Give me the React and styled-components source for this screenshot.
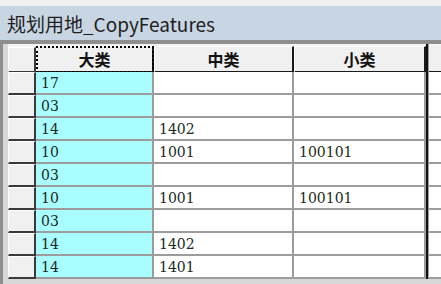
import React from "react";
import styled, { createGlobalStyle } from "styled-components";

const Global = createGlobalStyle`
  html, body { margin: 0; padding: 0; background: #f3f3f3; overflow: hidden; }
  body { width: 441px; height: 284px; }
`;

const Window = styled.div`
  width: 441px;
  height: 284px;
  display: flex;
  flex-direction: column;
  background: #f3f3f3;
`;

const TopStrip = styled.div`
  height: 6px;
  background: #eef0f2;
`;

const TitleBar = styled.div`
  height: 34px;
  background: #c8d5e2;
  display: flex;
  align-items: center;
  padding-left: 7px;
  padding-top: 1px;
  box-sizing: border-box;
  font-family: "Noto Sans CJK SC", "Noto Sans", sans-serif;
  font-size: 19px;
  color: #1e1e1e;
  white-space: nowrap;
`;

const Frame = styled.div`
  flex: 1;
  border-top: 4px solid #8e8e8e;
  border-left: 3px solid #8e8e8e;
  background: #d8d8d8;
  padding-left: 5px;
  overflow: hidden;
`;

const Row = styled.div`
  display: grid;
  grid-template-columns: 28px 118px 140px 132px 3px 20px;
  height: ${(p) => p.$h}px;
  background: #f3f3f3;
`;

const Selector = styled.div`
  box-sizing: border-box;
  background: #f0f0f0;
  border-top: 1px solid #ffffff;
  border-left: 1px solid #ffffff;
  border-right: 2px solid #3a3a3a;
  border-bottom: 2px solid #3a3a3a;
  margin-top: ${(p) => (p.$header ? 3 : 0)}px;
`;

const Head = styled.div`
  box-sizing: border-box;
  background: #f0f0f0;
  margin-top: 2px;
  border-top: 1px solid #ffffff;
  border-left: 1px solid #ffffff;
  border-right: 2px solid #1a1a1a;
  border-bottom: 2px solid #1a1a1a;
  display: flex;
  align-items: center;
  justify-content: center;
  font-family: "Noto Sans CJK SC", sans-serif;
  font-weight: 700;
  font-size: 16px;
  color: #111;
  outline: ${(p) => (p.$focus ? "2px dotted #000" : "none")};
  outline-offset: -2px;
`;

const Cell = styled.div`
  box-sizing: border-box;
  background: ${(p) => (p.$key ? "#a9fdff" : "#ffffff")};
  border-right: 2px solid #9c9c9c;
  border-bottom: 2px solid #9c9c9c;
  padding-left: 5px;
  display: flex;
  align-items: center;
  font-family: "DejaVu Serif", "Liberation Serif", serif;
  font-size: 14px;
  color: #1b2a1b;
  white-space: nowrap;
`;

const Divider = styled.div`
  background: #111;
  border-right: 1px solid #9c9c9c;
`;

const Extra = styled.div`
  box-sizing: border-box;
  background: ${(p) => (p.$header ? "#f0f0f0" : "#ffffff")};
  border-bottom: 2px solid ${(p) => (p.$header ? "#1a1a1a" : "#9c9c9c")};
  margin-top: ${(p) => (p.$header ? 2 : 0)}px;
`;

const rows = [
  ["17", "", ""],
  ["03", "", ""],
  ["14", "1402", ""],
  ["10", "1001", "100101"],
  ["03", "", ""],
  ["10", "1001", "100101"],
  ["03", "", ""],
  ["14", "1402", ""],
  ["14", "1401", ""],
];

export default function App() {
  return (
    <>
      <Global />
      <Window>
        <TopStrip />
        <TitleBar>规划用地_CopyFeatures</TitleBar>
        <Frame>
          <Row $h={28}>
            <Selector $header />
            <Head $focus>大类</Head>
            <Head>中类</Head>
            <Head>小类</Head>
            <Divider />
            <Extra $header />
          </Row>
          {rows.map((r, i) => (
            <Row key={i} $h={23}>
              <Selector />
              <Cell $key>{r[0]}</Cell>
              <Cell>{r[1]}</Cell>
              <Cell>{r[2]}</Cell>
              <Divider />
              <Extra />
            </Row>
          ))}
        </Frame>
      </Window>
    </>
  );
}
